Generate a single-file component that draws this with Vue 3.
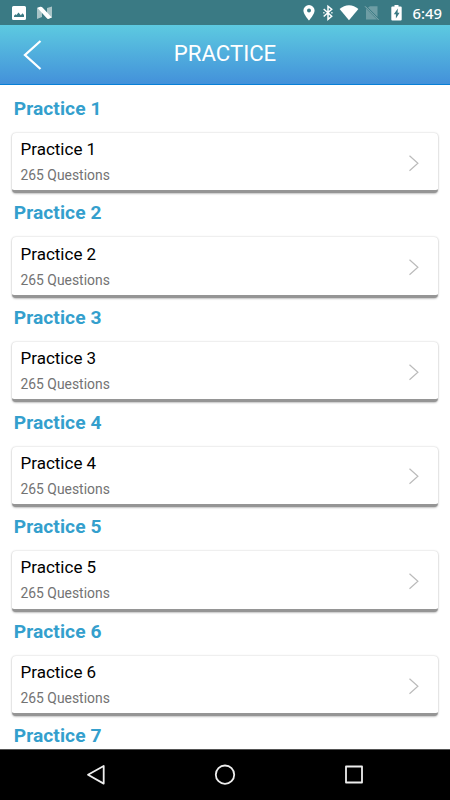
<script setup>
const sections = [1, 2, 3, 4, 5, 6, 7].map((n) => ({ title: `Practice ${n}`, count: 265, open: n < 7 }))
</script>

<template>
  <div class="screen">
    <div class="status">
      <svg class="status-left" viewBox="0 0 60 25" width="60" height="25">
        <path fill="#fff" fill-rule="evenodd" d="M3.500 6h11q1.500 0 1.500 1.500v11q0 1.500-1.500 1.500h-11Q2 20 2 18.500v-11Q2 6 3.500 6zM4 17h10v-2l-1.500-1.800-1.700 2-2.300-2.700-2 2.500-1-.8L4 15.700z" />
        <path fill="#a9c4c7" d="M27 8l5-1v10l-5 2zM37 8l5-1.500v11L37 19z" />
        <path fill="#fff" d="M27.300 7.800l3-1.100q1.300-.3 2.200.8l9.300 10-3 1.300q-1.200.4-2.200-.7z" />
      </svg>
      <svg class="status-right" viewBox="0 0 106 25" width="106" height="25">
        <path fill="#fff" fill-rule="evenodd" d="M9 5a5.600 5.600 0 0 1 5.600 5.600C14.600 14.500 9 20.500 9 20.500S3.400 14.500 3.400 10.600A5.600 5.600 0 0 1 9 5zm0 3.600a2 2 0 1 0 0 4 2 2 0 0 0 0-4z" />
        <path fill="none" stroke="#fff" stroke-width="1.500" d="M23.700 9l8 7.300-3.700 3.100V6.200l3.700 3-8 7.300M23.300 12.700h1.200M31.300 12.700h1.200" />
        <path fill="#fff" d="M39.600 9.100C45 4 53 4 58.400 9.100L49 20.300z" />
        <path fill="#6e9da4" d="M70 6.300H77.500v10.800L68 7.600zM66 8.500L77 19.500H66z" />
        <path fill="none" stroke="#8db0b5" stroke-width="1" d="M65 6.300l13.500 13.500" />
        <path fill="#fff" fill-rule="evenodd" d="M94.500 5h4v1.500h2.200q1 0 1 1v12q0 1-1 1h-8.400q-1 0-1-1v-12q0-1 1-1h2.200zM97.800 8.500l-4 5.800h2.100V18.500l3.700-5.800h-2z" />
      </svg>
      <span class="time">6:49</span>
    </div>
    <header class="header">
      <svg class="back" viewBox="0 0 24 34" width="24" height="34">
        <path d="M18.500 3L3 17l15.500 14" fill="none" stroke="#fff" stroke-width="2.300" />
      </svg>
      <h1 class="title">PRACTICE</h1>
    </header>
    <main class="list">
      <section v-for="s in sections" :key="s.title" class="section">
        <h2 class="heading">{{ s.title }}</h2>
        <div v-if="s.open" class="card">
          <div class="info">
            <div class="name">{{ s.title }}</div>
            <div class="count">{{ s.count }} Questions</div>
          </div>
          <svg class="chevron" viewBox="0 0 12 18" width="12" height="18">
            <path d="M1.500 1.700L9.900 9.200 1.500 16.700" fill="none" stroke="#bbb" stroke-width="1.200" />
          </svg>
        </div>
      </section>
    </main>
    <nav class="nav">
      <svg viewBox="0 0 450 50" width="450" height="50" fill="none" stroke="#eee" stroke-width="1.800" stroke-linejoin="round">
        <path d="M103.700 16v17.600L88 24.800z" />
        <circle cx="225" cy="24.700" r="9.200" />
        <rect x="346" y="16.500" width="16" height="16" />
      </svg>
    </nav>
  </div>
</template>

<style>
body {
  margin: 0;
  overflow: hidden;
}
</style>

<style scoped>
.screen {
  display: flex;
  flex-direction: column;
  width: 450px;
  height: 800px;
  overflow: hidden;
  background: #fff;
  font-family: Roboto, sans-serif;
}
.status {
  display: flex;
  flex: none;
  height: 25px;
  padding: 0 8px 0 10px;
  background: #3a7a84;
}
.status-left {
  margin-right: auto;
}
.time {
  width: 33px;
  color: #fff;
  font-family: "Noto Sans", sans-serif;
  font-size: 14.8px;
  font-weight: 500;
  line-height: 26px;
  text-align: right;
  white-space: nowrap;
}
.status-right {
  margin-right: 3px;
}
.header {
  box-sizing: border-box;
  display: flex;
  flex: none;
  align-items: center;
  height: 60px;
  padding: 0 22px;
  border-bottom: 1px solid #087fd6;
  background: linear-gradient(#5dcae0, #4391da);
}
.title {
  flex: 1;
  margin: 0 24px 0 0;
  color: #fff;
  font-size: 22.2px;
  font-weight: 400;
  line-height: 56px;
  padding-bottom: 3px;
  text-align: center;
}
.list {
  flex: 1;
  min-height: 0;
  overflow: hidden;
  padding: 3.900px 12px 0;
}
.section {
  height: 104.6px;
}
.section:last-child {
  height: 44px;
}
.heading {
  height: 43.900px;
  margin: 0;
  padding-left: 1.700px;
  color: #349fcd;
  font-size: 19.2px;
  font-weight: 700;
  letter-spacing: 0.08px;
  line-height: 40.400px;
}
.card {
  box-sizing: border-box;
  display: flex;
  align-items: center;
  height: 60.5px;
  padding: 1px 18.500px 0 8.500px;
  border-bottom: 3px solid #959595;
  border-radius: 4px;
  background: #fff;
  box-shadow: 0 0 2px rgba(0, 0, 0, 0.22), 0 1px 2px rgba(0, 0, 0, 0.18);
}
.info {
  flex: 1;
}
.name {
  color: #000;
  font-size: 17px;
  line-height: 26px;
}
.count {
  color: #737373;
  font-size: 13.9px;
  line-height: 26px;
}
.chevron {
  margin-top: 1px;
}
.nav {
  box-sizing: border-box;
  flex: none;
  height: 51px;
  border-top: 1px solid #555;
  background: #000;
}
.nav svg {
  display: block;
}
</style>
